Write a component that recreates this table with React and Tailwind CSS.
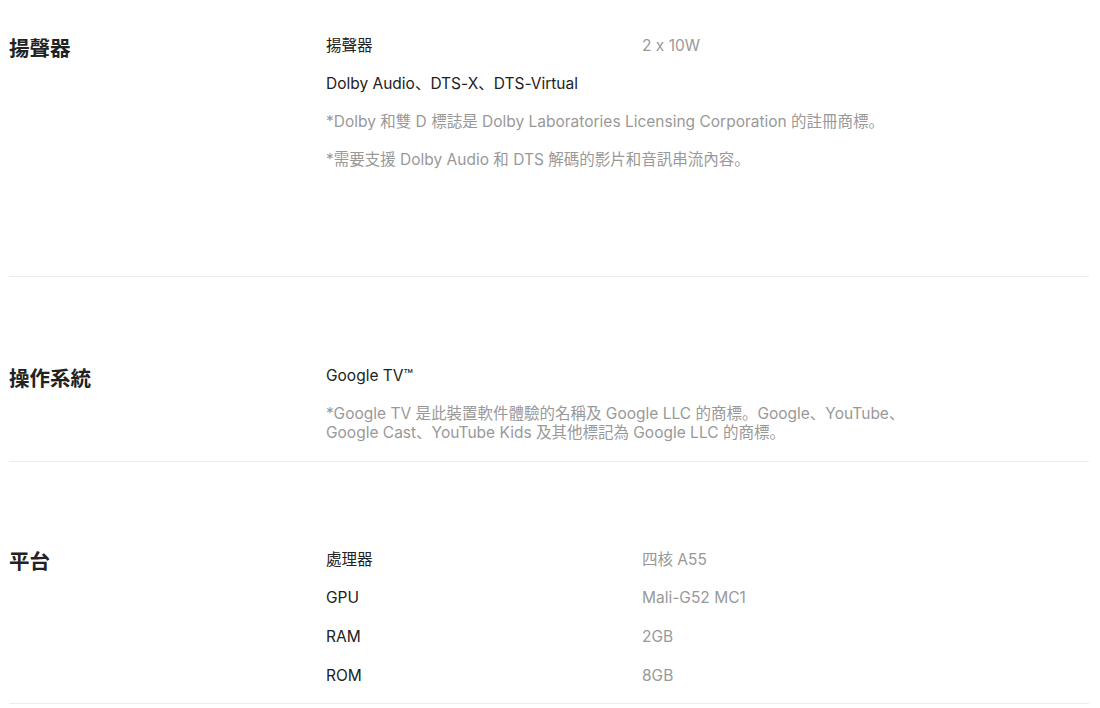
function Row({ label, value, tall }) {
  return (
    <div className={`flex items-center text-[15.5px] ${tall ? 'h-[38.7px]' : 'h-[38px]'}`}>
      <div className="w-[316px] text-[#222]">{label}</div>
      {value && <div className="text-[#999]">{value}</div>}
    </div>
  );
}

function Section({ title, className, children }) {
  return (
    <section className={`flex border-b border-[#ececec] ${className}`}>
      <h2 className="w-[317px] shrink-0 pt-[8px] text-[20.5px] font-bold leading-[28px] text-[#222]">
        {title}
      </h2>
      <div className="flex-1">{children}</div>
    </section>
  );
}

export default function App() {
  return (
    <div className="min-h-screen bg-white pl-[9px] pr-[11px] text-[#222] [font-family:Inter,'Noto_Sans_CJK_JP',sans-serif] [font-feature-settings:'calt'_0]">
      <Section title="揚聲器" className="pt-[27px] pb-[97px]">
        <Row label="揚聲器" value="2 x 10W" />
        <Row label="Dolby Audio、DTS-X、DTS-Virtual" />
        <div className="flex h-[38px] items-center text-[15.5px] text-[#999]">
          *Dolby 和雙 D 標誌是 Dolby Laboratories Licensing Corporation 的註冊商標。
        </div>
        <div className="flex h-[38px] items-center text-[15.5px] text-[#999]">
          *需要支援 Dolby Audio 和 DTS 解碼的影片和音訊串流內容。
        </div>
      </Section>

      <Section title="操作系統" className="pt-[80px] pb-[19px]">
        <Row label="Google TV™" />
        <p className="mt-[9px] text-[15.5px] leading-[19px] text-[#999]">
          *Google TV 是此裝置軟件體驗的名稱及 Google LLC 的商標。Google、YouTube、
          <br />
          Google Cast、YouTube Kids 及其他標記為 Google LLC 的商標。
        </p>
      </Section>

      <Section title="平台" className="pt-[78px] pb-[8px]">
        <Row tall label="處理器" value="四核 A55" />
        <Row tall label="GPU" value="Mali-G52 MC1" />
        <Row tall label="RAM" value="2GB" />
        <Row tall label="ROM" value="8GB" />
      </Section>
    </div>
  );
}
